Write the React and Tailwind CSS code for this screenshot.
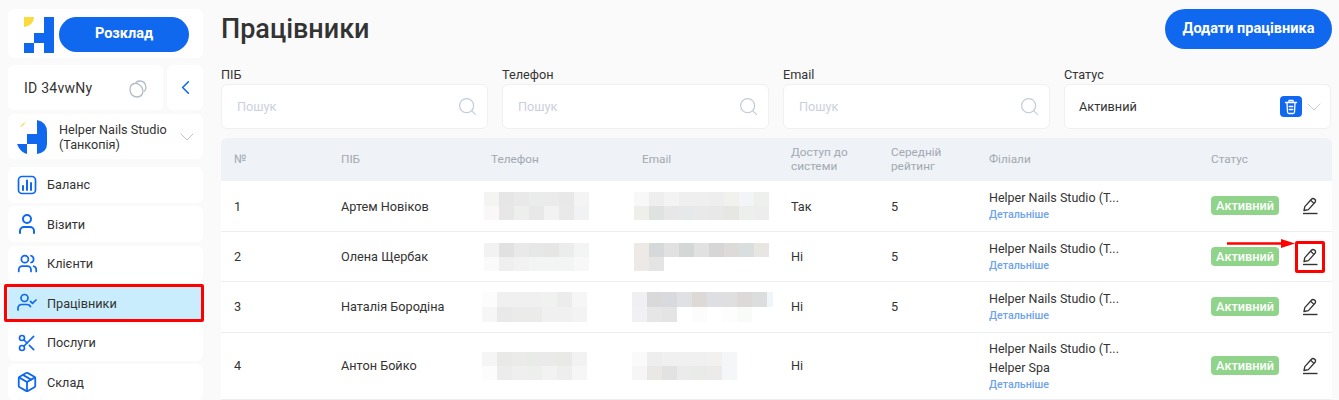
import { ChevronLeft, ChevronDown, Search, User, Users, Scissors, Package } from 'lucide-react'

const ROW_COLS = 'grid grid-cols-[107px_150px_151px_149px_100px_98px_222px_90px_1fr]'

const menu = [
  { label: 'Баланс', icon: 'chart' },
  { label: 'Візити', icon: User, size: 24, low: true },
  { label: 'Клієнти', icon: Users, size: 21 },
  { label: 'Працівники', icon: 'check', active: true, low: true },
  { label: 'Послуги', icon: Scissors, size: 20 },
  { label: 'Склад', icon: Package, size: 22, low: true },
]

const rows = [
  {
    num: 1, name: 'Артем Новіков', access: 'Так', rating: '5', h: 'h-[50px]', low: true, branches: ['Helper Nails Studio (Т...'],
    phone: { ml: 6, rows: [['f4f4f2', 'e6e6e6', 'e9e9e9', 'e9ecea', 'ebebeb', 'e8e8e8', 'f4f4f4'], ['f9f7f7', 'e7e7e7', 'edefed', 'e8e8e8', 'f2f2f2', 'e9e9e9', 'f1f2f4']] },
    email: { ml: 5, rows: [['f8f8f8', 'eeeeee', 'f3f3f3', 'efefef', 'efefef', 'eeeeee', 'f1f2ee', 'f3f4f7', 'eef0ee'], ['eeeeeb', 'dfe2e0', 'e7e7e7', 'e7e8ea', 'e9e9e9', 'e8e8e8', 'e6e6e2', 'edefed', 'ecedec']] },
  },
  {
    num: 2, name: 'Олена Щербак', access: 'Ні', rating: '5', h: 'h-[49px]', branches: ['Helper Nails Studio (Т...'],
    phone: { ml: 6, rows: [['f2f2f2', 'e1e1e1', 'e9e9e9', 'e5e8e7', 'e6e6e4', 'eaedeb', 'f3f5f4'], ['fafafa', 'efefef', 'f2f2f2', 'f3f5f4', 'f3f4f4', 'f3f4f4', 'f8f8f8']] },
    email: { ml: 5, rows: [['ece9e7', 'd6d9d9', 'e1e1e1', 'd5d7d6', 'e1e1e1', 'd6d6d6', 'dddbda', 'd9dedf', 'e8e6e3'], ['ece9e7', 'e4e4e4']] },
  },
  {
    num: 3, name: 'Наталія Бородіна', access: 'Ні', rating: '5', h: 'h-[50px]', branches: ['Helper Nails Studio (Т...'], tall: true,
    phone: { ml: 4, rows: [['fcfcfc', 'f0f0f0', 'f0f0f0', 'f0f0f0', 'f0f2f0', 'ececec', 'f6f6f6'], ['f6f6f6', 'e9e9e9', 'ebebe9', 'ebebe9', 'f0f0f0', 'f0f0f0', 'f2f3f2']] },
    email: { ml: 3, rows: [['f0f0f4', 'd9d9d9', 'd8dadd', 'dfe1e3', 'dcd9d7', 'dddfe2', 'dfdfe0', 'dcd9d8', 'dcdedd', 'f0f5f9'], ['f0f0f5', 'e6e6e6', 'e4e4e4', 'ffffff', 'fcfcfc', 'ffffff', 'fdfdfd', 'f9fbf9']] },
  },
  {
    num: 4, name: 'Антон Бойко', access: 'Ні', rating: '', h: 'h-[66px]', branches: ['Helper Nails Studio (Т...', 'Helper Spa'],
    phone: { ml: 4, rows: [['f5f5f5', 'e9e9e7', 'ebebe9', 'e9ebe9', 'eaeaea', 'e9e9e7', 'f2f2f2'], ['fcfcfc', 'ececec', 'efefef', 'edefed', 'f2f2f2', 'eeeeee', 'f6f6f6']] },
    email: { ml: 3, rows: [['f9faf9', 'eeeeee', 'f0f0f0', 'f0f0f0', 'f0f0f0', 'f3f1ef', 'f5f6f8'], ['f6f6f6', 'e9e8e6', 'e2e2e2', 'ebebeb', 'e9ebe9', 'ecebe9', 'f5f6f8']] },
  },
]

const Logo = () => (
  <svg width="30" height="36" viewBox="0 0 30 36" className="shrink-0 mt-[1px]">
    <path d="M0 0h10a10 10 0 0 1-10 10z" fill="#fcd93c" />
    <path d="M20 0h10v36H20zM10 16h10v10H10zM0 26h10v10H0z" fill="#1068ee" />
  </svg>
)

const CompanyLogo = () => (
  <svg width="30" height="34" viewBox="0 0 30 34" className="shrink-0">
    <path d="M3 7 Q6 3 9 2 Q7 5 4 7z" fill="#fcd93c" />
    <path d="M20 0 Q30 2 30 12 V24 Q30 32 20 34zM10 14h10v10H10zM0 24h10v10 Q3 32 0 24z" fill="#1068ee" />
  </svg>
)

const CopyIcon = () => (
  <svg width="18" height="18" viewBox="0 0 18 18" fill="none" stroke="#b4bcc6" strokeWidth="1.3">
    <path d="M6.5 3.2 Q8 1 10.5 1 Q16.5 1 17 7.5 Q17 10 15 11.5" />
    <path d="M5.5 3.5 Q8 3 10 4.5 Q14.5 7.5 13.8 12.5 Q13 16.5 8.5 17 Q5 17 3 15 Q1 13 1 9.5 Q1 4.5 5.5 3.5z" />
  </svg>
)

const ChartIcon = () => (
  <svg width="20" height="20" viewBox="0 0 20 20" fill="none" stroke="#1068ee" strokeWidth="1.7" strokeLinecap="round">
    <rect x="1.5" y="1.5" width="17" height="17" rx="3.5" />
    <path d="M6 11v4M10 5.5v9.5M14 8v7" strokeWidth="2" />
  </svg>
)

const CheckUserIcon = () => (
  <svg width="20" height="20" viewBox="0 0 20 20" fill="none" stroke="#1068ee" strokeWidth="1.7" strokeLinecap="round" strokeLinejoin="round">
    <circle cx="7.5" cy="5" r="3.5" />
    <path d="M1 17v-1.5Q1 11.5 5 11.5h5Q12.5 11.5 13.5 13.5" />
    <path d="M13.5 8.5l2 1.8 3.5-3.3" />
  </svg>
)

const BinIcon = () => (
  <svg width="14" height="16" viewBox="0 0 14 16" fill="none" stroke="#fff" strokeWidth="1.3" strokeLinecap="round" strokeLinejoin="round">
    <path d="M1.5 3.5h11M5 3.3V1.5h4v1.8" />
    <path d="M3 3.7l.5 9.3q.1 1.5 1.5 1.5h4q1.4 0 1.5-1.5l.5-9.3" />
    <path d="M5.2 7.5h3.6M5.2 10.5h3.6" />
  </svg>
)

const PencilIcon = () => (
  <svg width="16" height="18" viewBox="0 0 16 18" fill="none" stroke="#333" strokeWidth="1.3" strokeLinejoin="round">
    <path d="M1 16.5h14.5" strokeWidth="1.4" />
    <path d="M2 13.5 L2.8 9.6 L9.4 2.3 Q10.8 0.8 12.6 2.1 Q14.3 3.6 13 5.3 L6.4 12.6 Z" />
    <path d="M8.6 3.2 L12 6.4" />
  </svg>
)

const BlurBlock = ({ block, tall }) => (
  <div style={{ marginLeft: block.ml }} className="flex flex-col">
    {block.rows.map((cells, i) => (
      <div key={i} className={`flex ${tall ? 'h-[15px]' : 'h-[14px]'}`}>
        {cells.map((c, j) => (
          <div key={j} className={`h-full ${j === 9 ? 'w-[6px]' : 'w-[15px]'}`} style={{ backgroundColor: `#${c}` }} />
        ))}
      </div>
    ))}
  </div>
)

const Filter = ({ label }) => (
  <div className="flex-1">
    <div className="text-[12.7px] leading-[15px] text-[#333] mb-[2px]">{label}</div>
    <div className="h-[45px] bg-white rounded-md border border-[#f0f0f0] flex items-center justify-between pl-[15px] pr-[9px]">
      <span className="text-[12.7px] text-[#c9d1dd]">Пошук</span>
      <Search size={21} strokeWidth={1.4} className="text-[#c3ccd8]" />
    </div>
  </div>
)

export default function App() {
  return (
    <div className="relative w-[1339px] h-[400px] overflow-hidden bg-[#fafafa] flex font-['Roboto',sans-serif] text-[#333]">
      {/* Sidebar */}
      <aside className="w-[195px] ml-2 pt-[9px] shrink-0 flex flex-col">
        <div className="h-[50px] bg-white rounded-md flex items-center pl-4 pt-[1px] gap-[5px]">
          <Logo />
          <button className="w-[130px] h-[35px] rounded-full bg-[#1068ee] text-white text-[14.5px] font-bold">Розклад</button>
        </div>
        <div className="flex gap-1 mt-[7px]">
          <div className="w-[155px] h-[45px] bg-white rounded-md flex items-center justify-between pl-4 pr-4 pt-[2px]">
            <span className="text-[14px] tracking-[0.25px]">ID 34vwNy</span>
            <CopyIcon />
          </div>
          <div className="w-[36px] h-[45px] bg-white rounded-md flex items-center justify-center">
            <ChevronLeft size={23} strokeWidth={1.7} className="text-[#1068ee]" />
          </div>
        </div>
        <div className="h-[45px] bg-white rounded-md mt-[4px] flex items-center pl-[9px] pr-[4px]">
          <CompanyLogo />
          <div className="ml-3 text-[12.65px] leading-[15px] flex-1">Helper Nails Studio<br />(Танкопія)</div>
          <ChevronDown size={24} strokeWidth={1} className="text-[#b9c2ce]" />
        </div>
        <nav className="flex flex-col gap-[3.5px] mt-[7.5px]">
          {menu.map((item) => {
            const Icon = item.icon
            return (
              <div key={item.label} className={`h-9 shrink-0 rounded-md flex items-center pl-[9px] gap-[10px] ${item.active ? 'bg-[#c9edfc]' : 'bg-white'}`}>
                <span className="w-[20px] flex justify-center">
                  {item.icon === 'chart' ? <ChartIcon /> : item.icon === 'check' ? <CheckUserIcon /> : <Icon size={item.size} strokeWidth={2} className="text-[#1068ee] shrink-0" />}
                </span>
                <span className={`text-[12.7px] ${item.low ? 'translate-y-px' : ''}`}>{item.label}</span>
              </div>
            )
          })}
        </nav>
      </aside>

      {/* Main */}
      <main className="ml-[18px] w-[1111px] pt-[9px]">
        <div className="flex items-center justify-between h-[40px]">
          <h1 className="text-[27px] font-medium text-[#333]">Працівники</h1>
          <button className="w-[167px] h-[40px] rounded-full bg-[#1068ee] text-white text-[14.5px] font-bold">Додати працівника</button>
        </div>
        <div className="flex gap-[14px] mt-[18px] pr-[1px]">
          <Filter label="ПІБ" />
          <Filter label="Телефон" />
          <Filter label="Email" />
          <div className="flex-1">
            <div className="text-[12.7px] leading-[15px] mb-[2px]">Статус</div>
            <div className="h-[45px] bg-white rounded-md border border-[#f0f0f0] flex items-center pl-[14px] pr-[4px]">
              <span className="text-[12.7px] flex-1">Активний</span>
              <span className="w-[22px] h-[21px] rounded bg-[#1068ee] flex items-center justify-center">
                <BinIcon />
              </span>
              <ChevronDown size={24} strokeWidth={1} className="text-[#c5cdd8]" />
            </div>
          </div>
        </div>

        <div className="mt-[9px]">
          <div className={`${ROW_COLS} h-[43px] pb-[2px] bg-[#eff2f6] rounded-t-md items-center text-[11.8px] leading-[14px] text-[#a3a9b2]`}>
            <div className="pl-[13px]">№</div>
            <div className="pl-[13px]">ПІБ</div>
            <div className="pl-[13px]">Телефон</div>
            <div className="pl-[13px]">Email</div>
            <div className="pl-[13px]">Доступ до<br />системи</div>
            <div className="pl-[13px]">Середній<br />рейтинг</div>
            <div className="pl-[13px]">Філіали</div>
            <div className="pl-[13px]">Статус</div>
            <div />
          </div>
          {rows.map((r) => {
            const cell = `pl-[13px] ${r.low ? 'translate-y-px' : ''}`
            return (
              <div key={r.num} className={`${ROW_COLS} ${r.h} box-content bg-white border-b border-[#eceef1] items-center text-[12.7px]`}>
                <div className={cell}>{r.num}</div>
                <div className={cell}>{r.name}</div>
                <div><BlurBlock block={r.phone} tall={r.tall} /></div>
                <div><BlurBlock block={r.email} tall={r.tall} /></div>
                <div className={cell}>{r.access}</div>
                <div className={cell}>{r.rating}</div>
                <div className="pl-[13px] leading-[19px]">
                  {r.branches.map((b) => <div key={b} className="text-[12.5px]">{b}</div>)}
                  <div className="text-[10.7px] leading-[17px] text-[#6fa3ea] font-medium -translate-y-px">Детальніше</div>
                </div>
                <div className="pl-[13px]">
                  <span className="inline-flex items-center justify-center w-[68px] h-[19px] rounded bg-[#8fd48a] text-white text-[12.7px] font-medium">Активний</span>
                </div>
                <div className="pl-[14px]"><PencilIcon /></div>
              </div>
            )
          })}
        </div>
      </main>

      {/* Red annotations */}
      <div className="absolute left-[4px] top-[284px] w-[200px] h-[38px] border-[3px] border-[#ff0000] rounded-[2px]" />
      <div className="absolute left-[1295px] top-[241px] w-[30px] h-[32px] border-[3px] border-[#ff0000] rounded-[2px]" />
      <svg className="absolute left-[1227px] top-[238px]" width="70" height="12" viewBox="0 0 70 12">
        <path d="M0 5.5h56" stroke="#ff0000" strokeWidth="2.5" />
        <path d="M54 1l14 4.5-14 4.5z" fill="#ff0000" />
      </svg>
    </div>
  )
}
